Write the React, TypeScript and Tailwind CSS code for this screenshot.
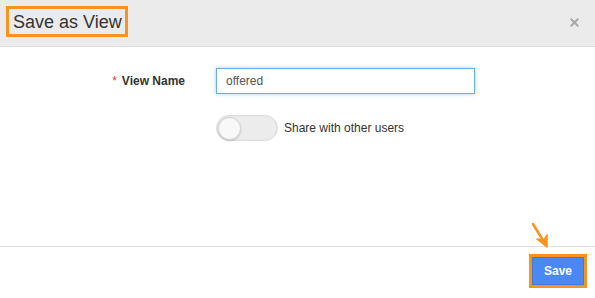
import { X } from 'lucide-react'

export default function App() {
  return (
    <div className="w-[595px] h-[298px] bg-white flex flex-col font-['Liberation_Sans',Arial,sans-serif] text-[#333]">
      {/* Header */}
      <div className="h-[47px] flex-shrink-0 bg-[#ebebeb] border-b border-[#dcdcdc] flex items-start justify-between pl-[6px] pr-[14px] pt-[6px]">
        <div className="h-[31px] w-[122px] border-[3px] border-[#f7931e] flex items-center pl-[4px] text-[18px] leading-none whitespace-nowrap text-[#333]">
          Save as View
        </div>
        <button className="mt-[10px] text-[#a8a8a8]" aria-label="Close">
          <X size={13} strokeWidth={3.5} />
        </button>
      </div>

      {/* Body */}
      <div className="flex-1 flex flex-col pt-[21px]">
        <div className="flex items-center">
          <label className="w-[186px] text-right pr-[1px] text-[12px] font-bold text-[#333]">
            <span className="text-[#e53935] mr-[5px] font-normal">*</span>View Name
          </label>
          <input
            readOnly
            value="offered"
            className="ml-[30px] w-[259px] h-[26px] border border-[#66afe9] shadow-[0_0_4px_rgba(102,175,233,0.6)] px-[9px] text-[12px] text-[#555] outline-none"
          />
        </div>
        <div className="flex items-center ml-[216px] mt-[21px]">
          <div className="w-[62px] h-[26px] rounded-full bg-[#ececec] border border-[#dedede] shadow-[inset_0_0_2px_rgba(0,0,0,0.08)] flex items-center pl-[1px]">
            <div className="w-[23px] h-[23px] rounded-full bg-[#f8f8f8] border border-[#d4d4d4] shadow-[0_1px_2px_rgba(0,0,0,0.15)]" />
          </div>
          <span className="ml-[6px] text-[12px] text-[#333]">Share with other users</span>
        </div>
      </div>

      {/* Footer */}
      <div className="h-[52px] flex-shrink-0 border-t border-[#e0e0e0] flex items-start justify-end pr-[8px] pt-[7px] relative">
        <svg className="absolute left-[529px] top-[-25px]" width="22" height="28" viewBox="0 0 22 28">
          <line x1="4" y1="2" x2="15" y2="20" stroke="#f7931e" strokeWidth="2.5" strokeLinecap="round" />
          <polygon points="8,17 18,25 18,13 15,18" fill="#f7931e" stroke="#f7931e" strokeWidth="1.5" strokeLinejoin="round" />
        </svg>
        <div className="w-[58px] h-[34px] border-[3px] border-[#f7931e] flex">
          <button className="flex-1 bg-[#4a89f3] text-white text-[12px] font-bold border border-[#3f79da]">
            Save
          </button>
        </div>
      </div>
    </div>
  )
}
